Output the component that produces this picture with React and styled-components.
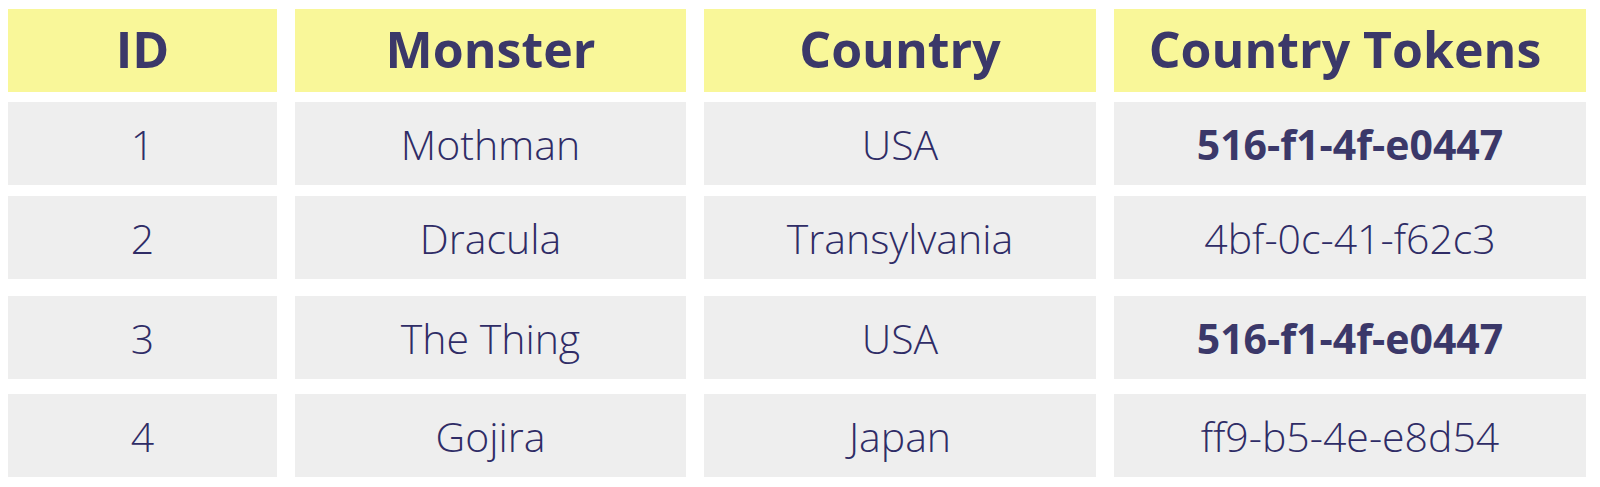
import React from "react";
import styled, { createGlobalStyle } from "styled-components";

const Global = createGlobalStyle`
  html, body { margin: 0; padding: 0; background: #ffffff; }
  body { font-family: "Open Sans", "Noto Sans", sans-serif; }
`;

const Table = styled.div`
  display: flex;
  flex-direction: column;
  padding: 9px 0 0 8px;
  width: 1600px;
  height: 487px;
  box-sizing: border-box;
`;

const Row = styled.div`
  display: grid;
  grid-template-columns: 269px 391px 392px 472px;
  column-gap: 18px;
  height: 83px;
  margin-top: ${(p) => p.$top}px;
`;

const Cell = styled.div`
  display: flex;
  align-items: center;
  justify-content: center;
  background: ${(p) => (p.$head ? "#f9f799" : "#eeeeee")};
  color: ${(p) => (p.$head || p.$bold ? "#3b3869" : "#2f2c66")};
  font-family: "Open Sans", "Noto Sans", sans-serif;
  font-size: ${(p) => (p.$head ? "50px" : "41px")};
  font-weight: ${(p) => (p.$head || p.$bold ? 700 : 300)};
  line-height: 1;
  white-space: nowrap;
  padding-top: ${(p) => (p.$head ? "0" : "1px")};
  padding-bottom: ${(p) => (p.$head ? "4px" : "0")};
  padding-right: ${(p) => p.$shift || 0}px;
`;

const headers = ["ID", "Monster", "Country", "Country Tokens"];
const rows = [
  { top: 10, cells: ["1", "Mothman", "USA", "516-f1-4f-e0447"], bold: true },
  { top: 11, cells: ["2", "Dracula", "Transylvania", "4bf-0c-41-f62c3"], bold: false },
  { top: 17, cells: ["3", "The Thing", "USA", "516-f1-4f-e0447"], bold: true },
  { top: 15, cells: ["4", "Gojira", "Japan", "ff9-b5-4e-e8d54"], bold: false },
];

export default function App() {
  return (
    <>
      <Global />
      <Table>
        <Row $top={0}>
          {headers.map((h, i) => (
            <Cell key={h} $head $shift={i === 3 ? 10 : 0}>
              {h}
            </Cell>
          ))}
        </Row>
        {rows.map((r) => (
          <Row key={r.cells[0]} $top={r.top}>
            {r.cells.map((c, i) => (
              <Cell key={i} $bold={i === 3 && r.bold}>
                {c}
              </Cell>
            ))}
          </Row>
        ))}
      </Table>
    </>
  );
}
